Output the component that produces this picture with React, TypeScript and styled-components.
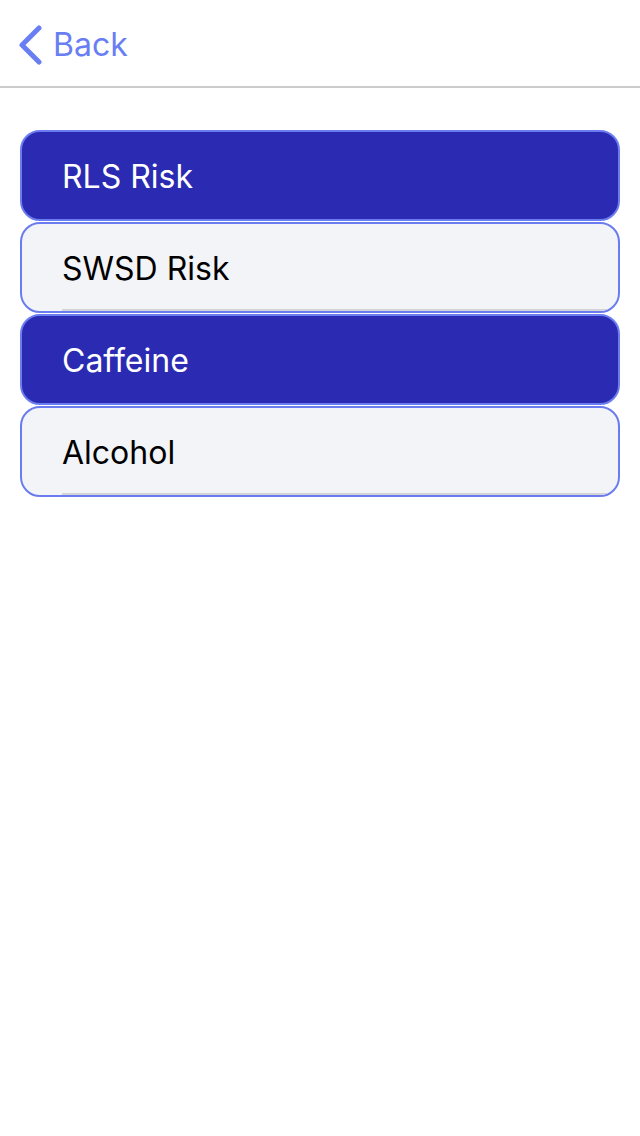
import React from "react";
import styled, { createGlobalStyle } from "styled-components";

const Global = createGlobalStyle`
  html, body { margin: 0; padding: 0; background: #ffffff; }
  body { font-family: Inter, "Noto Sans", sans-serif; -webkit-font-smoothing: antialiased; }
`;

const Page = styled.div`
  width: 640px;
  min-height: 1136px;
  background: #ffffff;
`;

const Header = styled.header`
  height: 86px;
  border-bottom: 2px solid #cccccc;
  display: flex;
  align-items: center;
  padding-left: 18px;
  box-sizing: content-box;
`;

const BackButton = styled.button`
  display: flex;
  align-items: center;
  gap: 9px;
  background: none;
  border: none;
  padding: 0;
  cursor: pointer;
  color: #6a7ef4;
  font-family: Inter, "Noto Sans", sans-serif;
  font-size: 32px;
  line-height: 1;
  margin-top: 3px;
`;

const List = styled.ul`
  list-style: none;
  margin: 0;
  padding: 42px 20px 0;
  display: flex;
  flex-direction: column;
  gap: 1px;
`;

const Item = styled.li<{ $active: boolean }>`
  position: relative;
  height: 91px;
  box-sizing: border-box;
  border: 2px solid #6b7cf0;
  border-radius: 20px;
  background: ${(p) => (p.$active ? "#2b2ab3" : "#f3f4f8")};
  color: ${(p) => (p.$active ? "#ffffff" : "#000000")};
  display: flex;
  align-items: center;
  padding-left: 40px;
  padding-top: 2px;
  font-size: 32px;
  overflow: hidden;
  &::after {
    content: "";
    display: ${(p) => (p.$active ? "none" : "block")};
    position: absolute;
    left: 40px;
    right: 0;
    bottom: 0;
    height: 2px;
    background: #d4d4d8;
  }
`;

const items = [
  { label: "RLS Risk", active: true },
  { label: "SWSD Risk", active: false },
  { label: "Caffeine", active: true },
  { label: "Alcohol", active: false },
];

export default function App() {
  return (
    <Page>
      <Global />
      <Header>
        <BackButton>
          <svg width="26" height="40" viewBox="0 0 26 40" fill="none">
            <path d="M21 3 L4 20 L21 37" stroke="#6a7ef4" strokeWidth="5" strokeLinecap="round" strokeLinejoin="round" />
          </svg>
          Back
        </BackButton>
      </Header>
      <List>
        {items.map((it) => (
          <Item key={it.label} $active={it.active}>
            {it.label}
          </Item>
        ))}
      </List>
    </Page>
  );
}
